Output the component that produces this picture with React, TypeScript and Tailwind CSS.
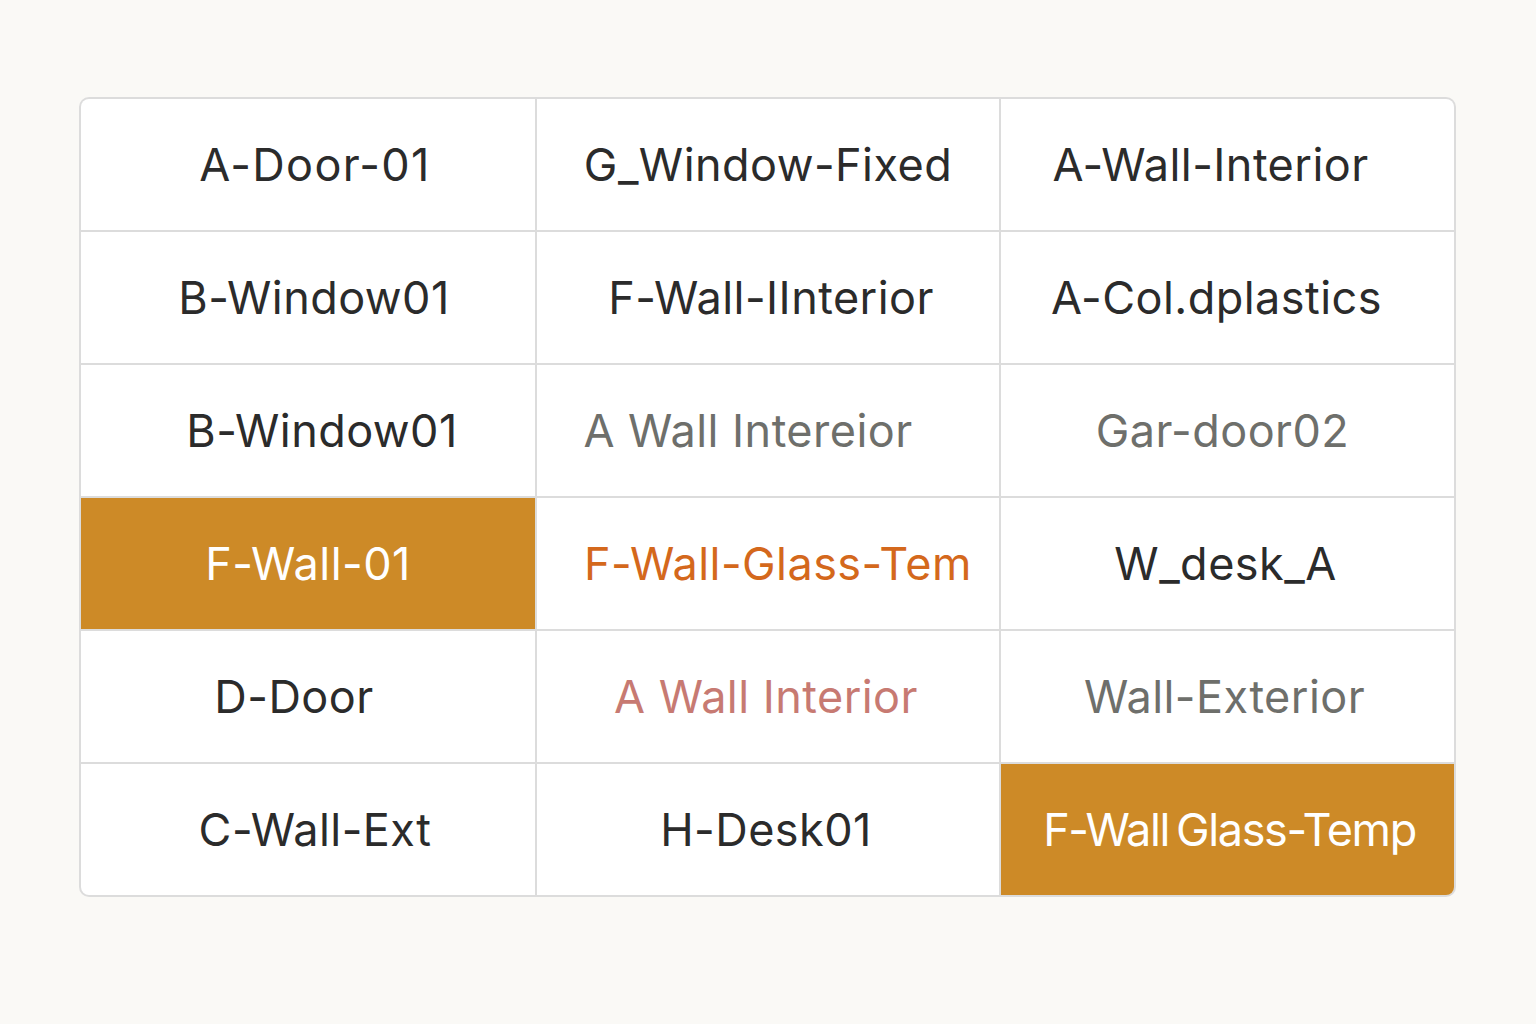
type Tone = 'dark' | 'grey' | 'orange' | 'pink' | 'fill';

// shift = small horizontal nudge so each label sits where it does in the mock
const cells: { text: string; tone: Tone; shift: string; track?: string }[] = [
  { text: 'A-Door-01', tone: 'dark', shift: 'pl-[14px]', track: 'tracking-[0.03em]' },
  { text: 'G_Window-Fixed', tone: 'dark', shift: '' },
  { text: 'A-Wall-Interior', tone: 'dark', shift: 'pr-[34px]' },
  { text: 'B-Window01', tone: 'dark', shift: 'pl-[12px]' },
  { text: 'F-Wall-IInterior', tone: 'dark', shift: 'pl-[6px]' },
  { text: 'A-Col.dplastics', tone: 'dark', shift: 'pr-[22px]' },
  { text: 'B-Window01', tone: 'dark', shift: 'pl-[28px]' },
  { text: 'A Wall Intereior', tone: 'grey', shift: 'pr-[40px]' },
  { text: 'Gar-door02', tone: 'grey', shift: 'pr-[10px]' },
  { text: 'F-Wall-01', tone: 'fill', shift: '' },
  { text: 'F-Wall-Glass-Tem', tone: 'orange', shift: 'pl-[20px]' },
  { text: 'W_desk_A', tone: 'dark', shift: 'pr-[4px]' },
  { text: 'D-Door', tone: 'dark', shift: 'pr-[28px]' },
  { text: 'A Wall Interior', tone: 'pink', shift: 'pr-[4px]' },
  { text: 'Wall-Exterior', tone: 'grey', shift: 'pr-[6px]' },
  { text: 'C-Wall-Ext', tone: 'dark', shift: 'pl-[14px]' },
  { text: 'H-Desk01', tone: 'dark', shift: 'pr-[4px]' },
  { text: 'F-Wall\u2009Glass-Temp', tone: 'fill', shift: 'pl-[4px]', track: 'tracking-[-0.03em]' },
];

const toneClass: Record<Tone, string> = {
  dark: 'bg-white text-[#2b2b2b]',
  grey: 'bg-white text-[#6e6f6b]',
  orange: 'bg-white text-[#d4681c]',
  pink: 'bg-white text-[#c77a72]',
  fill: 'bg-[#cd8a27] text-white',
};

export default function App() {
  return (
    <div className="min-h-screen bg-[#faf9f6] pt-[97px] pl-[79px]" style={{ fontFamily: 'Inter, "Open Sans", sans-serif' }}>
      <div className="w-[1377px] grid grid-cols-[454px_462px_453px] auto-rows-[131px] gap-[2px] bg-[#dcdcdc] border-2 border-[#dcdcdc] rounded-[10px] overflow-hidden">
        {cells.map((c, i) => (
          <div
            key={i}
            className={`flex items-center justify-center text-[45px] font-normal ${c.track ?? 'tracking-[0.01em]'} ${toneClass[c.tone]} ${c.shift}`}
          >
            {c.text}
          </div>
        ))}
      </div>
    </div>
  );
}
